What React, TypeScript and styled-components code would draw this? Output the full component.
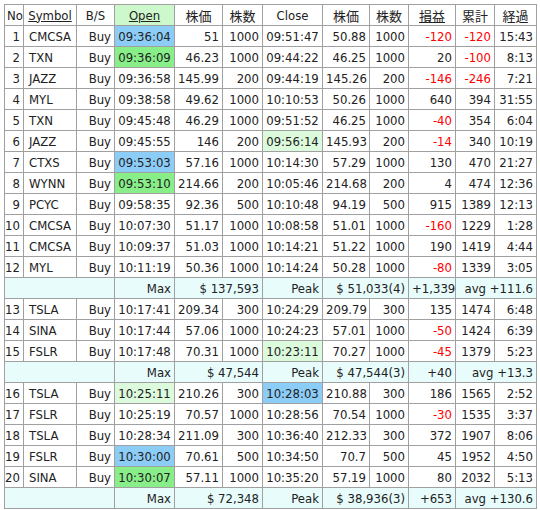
import React from "react";
import styled, { createGlobalStyle } from "styled-components";

const Global = createGlobalStyle`
  html, body { margin: 0; padding: 0; background: #ffffff; }
  body {
    font-family: "DejaVu Sans Condensed", "DejaVu Sans", "Noto Sans CJK JP", sans-serif;
    font-stretch: condensed;
    font-size: 13px;
    color: #222;
  }
`;

type Hl = "blue" | "green" | "light" | undefined;

const hlColor = (h: Hl) =>
  h === "blue" ? "#8ccdf8" : h === "green" ? "#88ee88" : h === "light" ? "#dcfadc" : "transparent";

const Page = styled.div`
  padding: 4px;
`;

const Table = styled.table`
  border-collapse: collapse;
  table-layout: fixed;
  width: 533px;
  border: 1px solid #a0a0a0;
`;

const HeadCell = styled.th<{ $hl?: boolean; $link?: boolean }>`
  height: 20px;
  padding: 0 2px;
  border: 1px solid #a0a0a0;
  font-weight: normal;
  text-align: center;
  white-space: nowrap;
  background: ${(p) => (p.$hl ? "#ccf8cc" : "#ffffff")};
  text-decoration: ${(p) => (p.$link ? "underline" : "none")};
  font-family: "DejaVu Sans Condensed", "DejaVu Sans", "Noto Sans CJK JP", sans-serif;
`;

const Cell = styled.td<{ $align?: "left" | "right" | "center"; $hl?: Hl; $neg?: boolean; $pl?: number }>`
  height: 20px;
  padding: 0 3px 0 ${(p) => (p.$pl ?? 3)}px;
  border: 1px solid #a0a0a0;
  white-space: nowrap;
  overflow: hidden;
  text-align: ${(p) => p.$align ?? "right"};
  background: ${(p) => hlColor(p.$hl)};
  color: ${(p) => (p.$neg ? "#ff0000" : "#222")};
`;

const SumCell = styled.td`
  height: 20px;
  padding: 0 3px;
  border: 1px solid #a0a0a0;
  white-space: nowrap;
  text-align: right;
  background: #e8fcfc;
`;

type Row = {
  no: number;
  sym: string;
  open: string;
  op: string;
  oq: string;
  close: string;
  cp: string;
  cq: string;
  pl: number;
  cum: number;
  el: string;
  ohl?: Hl;
  chl?: Hl;
};

type Sum = { max: string; peak: string; tot: string; avg: string };

const r = (
  no: number, sym: string, open: string, op: string, oq: string, close: string,
  cp: string, cq: string, pl: number, cum: number, el: string, ohl?: Hl, chl?: Hl
): Row => ({ no, sym, open, op, oq, close, cp, cq, pl, cum, el, ohl, chl });

const groups: { rows: Row[]; sum: Sum }[] = [
  {
    rows: [
      r(1, "CMCSA", "09:36:04", "51", "1000", "09:51:47", "50.88", "1000", -120, -120, "15:43", "blue"),
      r(2, "TXN", "09:36:09", "46.23", "1000", "09:44:22", "46.25", "1000", 20, -100, "8:13", "green"),
      r(3, "JAZZ", "09:36:58", "145.99", "200", "09:44:19", "145.26", "200", -146, -246, "7:21"),
      r(4, "MYL", "09:38:58", "49.62", "1000", "10:10:53", "50.26", "1000", 640, 394, "31:55"),
      r(5, "TXN", "09:45:48", "46.29", "1000", "09:51:52", "46.25", "1000", -40, 354, "6:04"),
      r(6, "JAZZ", "09:45:55", "146", "200", "09:56:14", "145.93", "200", -14, 340, "10:19", undefined, "light"),
      r(7, "CTXS", "09:53:03", "57.16", "1000", "10:14:30", "57.29", "1000", 130, 470, "21:27", "blue"),
      r(8, "WYNN", "09:53:10", "214.66", "200", "10:05:46", "214.68", "200", 4, 474, "12:36", "green"),
      r(9, "PCYC", "09:58:35", "92.36", "500", "10:10:48", "94.19", "500", 915, 1389, "12:13"),
      r(10, "CMCSA", "10:07:30", "51.17", "1000", "10:08:58", "51.01", "1000", -160, 1229, "1:28"),
      r(11, "CMCSA", "10:09:37", "51.03", "1000", "10:14:21", "51.22", "1000", 190, 1419, "4:44"),
      r(12, "MYL", "10:11:19", "50.36", "1000", "10:14:24", "50.28", "1000", -80, 1339, "3:05"),
    ],
    sum: { max: "$ 137,593", peak: "$ 51,033(4)", tot: "+1,339", avg: "avg +111.6" },
  },
  {
    rows: [
      r(13, "TSLA", "10:17:41", "209.34", "300", "10:24:29", "209.79", "300", 135, 1474, "6:48"),
      r(14, "SINA", "10:17:44", "57.06", "1000", "10:24:23", "57.01", "1000", -50, 1424, "6:39"),
      r(15, "FSLR", "10:17:48", "70.31", "1000", "10:23:11", "70.27", "1000", -45, 1379, "5:23", undefined, "light"),
    ],
    sum: { max: "$ 47,544", peak: "$ 47,544(3)", tot: "+40", avg: "avg +13.3" },
  },
  {
    rows: [
      r(16, "TSLA", "10:25:11", "210.26", "300", "10:28:03", "210.88", "300", 186, 1565, "2:52", "light", "blue"),
      r(17, "FSLR", "10:25:19", "70.57", "1000", "10:28:56", "70.54", "1000", -30, 1535, "3:37"),
      r(18, "TSLA", "10:28:34", "211.09", "300", "10:36:40", "212.33", "300", 372, 1907, "8:06"),
      r(19, "FSLR", "10:30:00", "70.61", "500", "10:34:50", "70.7", "500", 45, 1952, "4:50", "blue"),
      r(20, "SINA", "10:30:07", "57.11", "1000", "10:35:20", "57.19", "1000", 80, 2032, "5:13", "green"),
    ],
    sum: { max: "$ 72,348", peak: "$ 38,936(3)", tot: "+653", avg: "avg +130.6" },
  },
];

const widths = [19, 53, 38, 60, 48, 40, 60, 47, 39, 47, 39, 42];

const headers: { label: string; hl?: boolean; link?: boolean }[] = [
  { label: "No" },
  { label: "Symbol", link: true },
  { label: "B/S" },
  { label: "Open", hl: true, link: true },
  { label: "株価" },
  { label: "株数" },
  { label: "Close" },
  { label: "株価" },
  { label: "株数" },
  { label: "損益", link: true },
  { label: "累計" },
  { label: "経過" },
];

export default function App() {
  return (
    <Page>
      <Global />
      <Table>
        <colgroup>
          {widths.map((w, i) => (
            <col key={i} style={{ width: w }} />
          ))}
        </colgroup>
        <thead>
          <tr>
            {headers.map((h, i) => (
              <HeadCell key={i} $hl={h.hl} $link={h.link}>
                {h.label}
              </HeadCell>
            ))}
          </tr>
        </thead>
        <tbody>
          {groups.map((g, gi) => (
            <React.Fragment key={gi}>
              {g.rows.map((row) => (
                <tr key={row.no}>
                  <Cell $pl={0}>{row.no}</Cell>
                  <Cell $align="left" $pl={5}>{row.sym}</Cell>
                  <Cell>Buy</Cell>
                  <Cell $align="center" $hl={row.ohl}>{row.open}</Cell>
                  <Cell>{row.op}</Cell>
                  <Cell>{row.oq}</Cell>
                  <Cell $align="center" $hl={row.chl}>{row.close}</Cell>
                  <Cell>{row.cp}</Cell>
                  <Cell>{row.cq}</Cell>
                  <Cell $neg={row.pl < 0}>{row.pl}</Cell>
                  <Cell $neg={row.cum < 0}>{row.cum}</Cell>
                  <Cell>{row.el}</Cell>
                </tr>
              ))}
              <tr>
                <SumCell colSpan={3} />
                <SumCell>Max</SumCell>
                <SumCell colSpan={2}>{g.sum.max}</SumCell>
                <SumCell>Peak</SumCell>
                <SumCell colSpan={2}>{g.sum.peak}</SumCell>
                <SumCell>{g.sum.tot}</SumCell>
                <SumCell colSpan={2}>{g.sum.avg}</SumCell>
              </tr>
            </React.Fragment>
          ))}
        </tbody>
      </Table>
    </Page>
  );
}
